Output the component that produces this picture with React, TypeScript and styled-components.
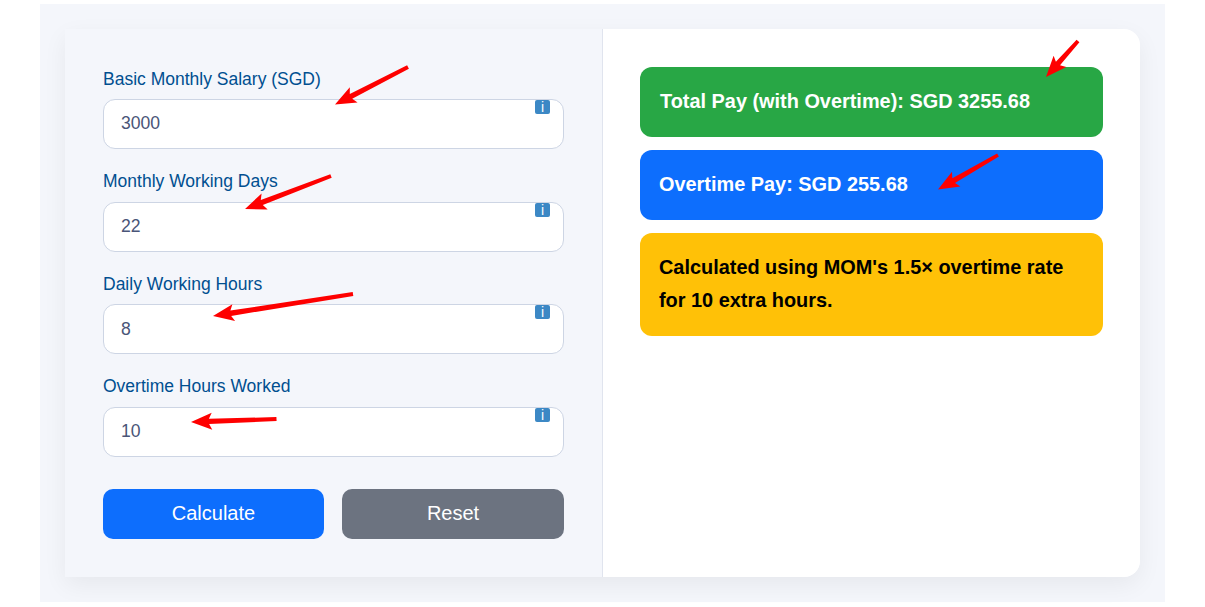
import React from "react";
import styled, { createGlobalStyle } from "styled-components";

const Global = createGlobalStyle`
  html, body { margin: 0; padding: 0; background: #fff; }
  body { font-family: "Liberation Sans", Arial, sans-serif; }
  * { box-sizing: border-box; }
`;

const Page = styled.div`
  position: relative;
  width: 1205px;
  height: 607px;
  padding: 4px 40px 5px;
  overflow: hidden;
`;

const Backdrop = styled.main`
  height: 598px;
  padding: 25px;
  background: #f4f6fb;
`;

const Card = styled.section`
  display: grid;
  grid-template-columns: 538px 537px;
  height: 548px;
  border-radius: 0 16px 16px 0;
  box-shadow: 0 8px 24px rgba(0, 0, 0, 0.06);
`;

const FormColumn = styled.form`
  display: flex;
  flex-direction: column;
  padding: 37.6px 38px 38px;
  background: #f4f6fb;
  border-right: 1px solid #e0e4ee;
`;

const Field = styled.div`
  display: flex;
  flex-direction: column;
  height: 102.6px;
`;

const Label = styled.label`
  display: block;
  height: 32.4px;
  font-size: 17.5px;
  line-height: 24px;
  color: #004f90;
`;

const InputWrap = styled.div`
  position: relative;
  height: 50px;
`;

const Input = styled.input`
  display: block;
  width: 100%;
  height: 50px;
  padding: 0 17px;
  border: 1px solid #cdd5e4;
  border-radius: 12px;
  background: #fff;
  color: #4a5578;
  font-family: inherit;
  font-size: 17.6px;
  outline: none;
`;

const InfoBadge = styled.span`
  position: absolute;
  top: 1px;
  right: 14px;
  width: 15px;
  height: 14px;
  border-radius: 2px;
  background: #3c88c5;
  color: #fff;
  font-size: 14px;
  font-weight: 400;
  line-height: 14px;
  text-align: center;
`;

const Actions = styled.div`
  display: grid;
  grid-template-columns: 221px 222px;
  gap: 18px;
  margin-top: -20.4px;
  padding-top: 32px;
`;

const Button = styled.button<{ $tone: string }>`
  height: 50px;
  border: none;
  border-radius: 10px;
  background: ${(p) => p.$tone};
  color: #fff;
  font-family: inherit;
  font-size: 20px;
`;

const ResultColumn = styled.div`
  display: flex;
  flex-direction: column;
  gap: 13px;
  padding: 38px 37px;
  background: #fff;
  border-radius: 0 16px 16px 0;
`;

const Result = styled.div<{ $bg: string; $fg: string; $inset: number }>`
  padding: 18px 19px 19.4px ${(p) => p.$inset}px;
  border-radius: 12px;
  background: ${(p) => p.$bg};
  color: ${(p) => p.$fg};
  font-size: 19.9px;
  font-weight: 700;
  line-height: 32.64px;
`;

const Overlay = styled.svg`
  position: absolute;
  inset: 0;
  pointer-events: none;
`;

const arrows = [
  [408, 67, 335, 104.5],
  [331, 176, 245, 209],
  [353, 294, 213, 316],
  [276.5, 419, 191, 422],
  [1078, 41, 1046, 77],
  [998, 155, 938, 189.5],
];

function arrowPoints([x1, y1, x2, y2]: number[]) {
  const len = Math.hypot(x2 - x1, y2 - y1);
  const ux = (x2 - x1) / len;
  const uy = (y2 - y1) / len;
  const nx = -uy;
  const ny = ux;
  const bx = x2 - ux * 21;
  const by = y2 - uy * 21;
  const pts = [
    [x1 + nx * 1.9, y1 + ny * 1.9],
    [bx + nx * 2.7 + ux * 3, by + ny * 2.7 + uy * 3],
    [bx + nx * 8.5, by + ny * 8.5],
    [x2, y2],
    [bx - nx * 8.5, by - ny * 8.5],
    [bx - nx * 2.7 + ux * 3, by - ny * 2.7 + uy * 3],
    [x1 - nx * 1.9, y1 - ny * 1.9],
  ];
  return pts.map((p) => p.map((v) => v.toFixed(1)).join(",")).join(" ");
}

const fields = [
  ["Basic Monthly Salary (SGD)", "3000"],
  ["Monthly Working Days", "22"],
  ["Daily Working Hours", "8"],
  ["Overtime Hours Worked", "10"],
];

export default function App() {
  return (
    <Page>
      <Global />
      <Backdrop>
        <Card>
          <FormColumn onSubmit={(e) => e.preventDefault()}>
            {fields.map(([label, value]) => (
              <Field key={label}>
                <Label>{label}</Label>
                <InputWrap>
                  <Input type="text" defaultValue={value} aria-label={label} />
                  <InfoBadge>i</InfoBadge>
                </InputWrap>
              </Field>
            ))}
            <Actions>
              <Button type="submit" $tone="#0d6efd">Calculate</Button>
              <Button type="button" $tone="#6c7380">Reset</Button>
            </Actions>
          </FormColumn>
          <ResultColumn>
            <Result $bg="#28a745" $fg="#fff" $inset={20}>Total Pay (with Overtime): SGD 3255.68</Result>
            <Result $bg="#0d6efd" $fg="#fff" $inset={19}>Overtime Pay: SGD 255.68</Result>
            <Result $bg="#ffc107" $fg="#000" $inset={19}>Calculated using MOM's 1.5× overtime rate for 10 extra hours.</Result>
          </ResultColumn>
        </Card>
      </Backdrop>
      <Overlay width="1205" height="607" viewBox="0 0 1205 607">
        {arrows.map((a) => (
          <polygon key={a.join()} points={arrowPoints(a)} fill="#fe0000" />
        ))}
      </Overlay>
    </Page>
  );
}
